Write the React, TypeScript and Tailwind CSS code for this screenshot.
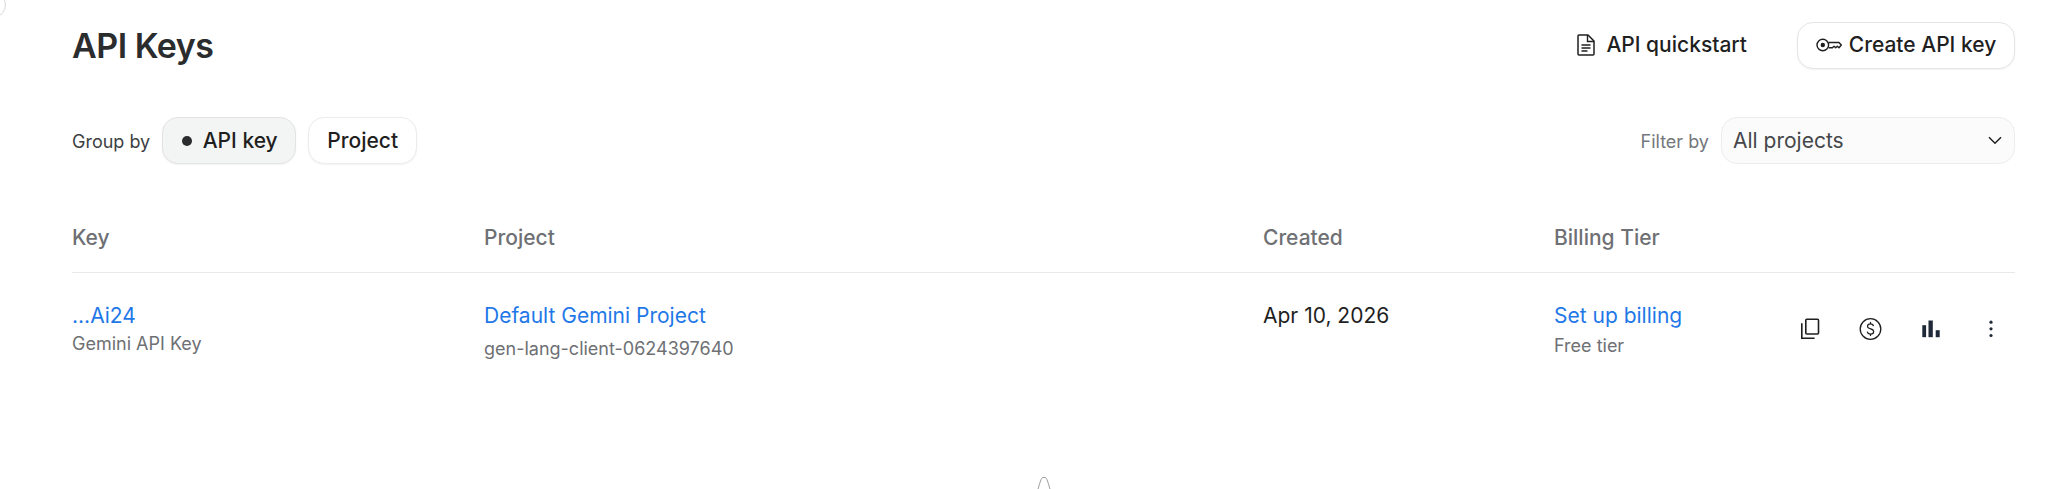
import React from "react";

const Copy = () => (
  <svg width="24" height="24" viewBox="0 0 24 24" fill="none" stroke="#1f1f1f" strokeWidth="1.6">
    <rect x="7.800" y="2.300" width="12.700" height="14.700" rx="1" />
    <path d="M3.800 6.200V21.200h12.800" />
  </svg>
);
const Dollar = () => (
  <svg width="24" height="24" viewBox="0 0 24 24" fill="none" stroke="#1f1f1f" strokeWidth="1.3" className="translate-x-[0.5px]">
    <circle cx="12" cy="12" r="10.300" />
    <path d="M15 9.200c-.3-1.500-1.500-2.400-3-2.400-1.700 0-3 1-3 2.500 0 3.400 6.200 1.900 6.200 5.200 0 1.600-1.400 2.600-3.200 2.600-1.600 0-2.900-.9-3.200-2.400M12 5v1.800M12 17.200V19" strokeWidth="1.200" />
  </svg>
);
const Bars = () => (
  <svg width="24" height="24" viewBox="0 0 24 24" fill="#1f2937">
    <rect x="3.300" y="8.200" width="3.800" height="12" />
    <rect x="9.500" y="3.500" width="4.300" height="16.700" />
    <rect x="16.700" y="13.200" width="4" height="7" />
  </svg>
);
const Dots = () => (
  <svg width="24" height="24" viewBox="0 0 24 24" fill="#1f2937">
    <circle cx="12" cy="5.200" r="1.600" />
    <circle cx="12" cy="11.800" r="1.600" />
    <circle cx="12" cy="18.500" r="1.600" />
  </svg>
);
const Doc = () => (
  <svg width="18" height="22" viewBox="0 0 18 22" fill="none" stroke="#1f1f1f" strokeWidth="1.500" className="shrink-0">
    <path d="M1 2a1 1 0 0 1 1-1h9l6 6v13a1 1 0 0 1-1 1H2a1 1 0 0 1-1-1z" strokeLinejoin="round" />
    <path d="M10.500 1v6.500H17M4.500 11h9M4.500 14h9M4.500 17h6" strokeWidth="1.400" />
  </svg>
);
const Key = () => (
  <svg width="26" height="14" viewBox="0 0 26 14" fill="none" stroke="#1f1f1f" strokeWidth="1.400" className="shrink-0">
    <circle cx="6.800" cy="7" r="5.800" />
    <circle cx="6.800" cy="7" r="1.500" fill="#1f1f1f" />
    <path d="M12.500 4.500h10.500l2.300 2.500-2.300 2.800-1.700-1.500-1.600 1.500-1.700-1.500-1.600 1.500H12.500" strokeLinejoin="round" />
  </svg>
);
const Chevron = () => (
  <svg width="14" height="9" viewBox="0 0 14 9" fill="none" stroke="#1f1f1f" strokeWidth="1.500" className="-mt-[2px] shrink-0">
    <path d="M1 1.200l6 6 6-6" />
  </svg>
);

export default function App() {
  return (
    <div className="relative h-[489px] w-[2060px] overflow-hidden bg-white pl-[72px] pr-[45px] text-[#1f1f1f] font-['Inter',sans-serif]">
      <div className="absolute -left-[20px] -top-[8px] h-[26px] w-[26px] rounded-full border border-[#dadada] bg-white" />
      <svg className="absolute left-[1037px] top-[476px]" width="14" height="13" viewBox="0 0 14 13" fill="none" stroke="#9a9a9a" strokeWidth="1">
        <path d="M1 13C3 7 4 1.500 6 1.500h2C10 1.500 11 7 13 13" />
      </svg>

      <div className="flex h-[89px] items-center justify-between">
        <h1 className="pt-[2px] text-[34px] font-semibold leading-10 tracking-[-0.5px] text-[#2b2c2e]">API Keys</h1>
        <div className="flex items-center gap-[50px] pt-[1px]">
          <div className="flex items-center gap-[11px] text-[21px] font-medium">
            <Doc />
            <span>API quickstart</span>
          </div>
          <div className="flex h-[47px] w-[218px] items-center justify-center gap-[7px] rounded-[16px] border border-[#e5e5e5] bg-white text-[21px] font-medium shadow-[0_1px_2px_rgba(0,0,0,0.05)]">
            <Key />
            <span>Create API key</span>
          </div>
        </div>
      </div>

      <div className="mt-[28px] flex h-[47px] items-center justify-between">
        <div className="flex items-center">
          <span className="mr-[12px] pt-[2px] text-[18px] text-[#3c3f43]">Group by</span>
          <div className="flex h-[47px] w-[134px] items-center justify-center gap-[11px] rounded-[16px] border border-[#e3e3e3] bg-[#f3f4f4] pl-[1px] pt-[1px] text-[21px] font-medium shadow-[0_1px_2px_rgba(0,0,0,0.05)]">
            <span className="h-[10px] w-[10px] rounded-full bg-[#2b2c2e]" />
            <span>API key</span>
          </div>
          <div className="ml-[12px] flex h-[47px] w-[109px] items-center justify-center rounded-[16px] border border-[#ececec] bg-white pt-[1px] text-[21px] font-medium shadow-[0_1px_2px_rgba(0,0,0,0.05)]">
            Project
          </div>
        </div>
        <div className="flex items-center">
          <span className="mr-[12px] pt-[2px] text-[18px] text-[#74777c]">Filter by</span>
          <div className="flex h-[47px] w-[294px] items-center justify-between rounded-[16px] border border-[#ececec] bg-[#fbfbfb] pl-[11px] pr-[12px] pt-[1px] text-[21px] text-[#45474a]">
            <span>All projects</span>
            <Chevron />
          </div>
        </div>
      </div>

      <div className="mt-[51px] grid h-[58px] grid-cols-[412px_779px_292px_1fr] items-center border-b border-[#e8e8e8] pb-[12px] text-[21px] font-medium text-[#6e7074]">
        <div>Key</div>
        <div>Project</div>
        <div>Created</div>
        <div className="-ml-[1px]">Billing Tier</div>
      </div>

      <div className="grid grid-cols-[412px_779px_292px_1fr] pt-[29px]">
        <div>
          <div className="text-[21px] leading-[28px] text-[#1f78e8]">...Ai24</div>
          <div className="mt-[3px] text-[18px] leading-[22px] text-[#6e7074]">Gemini API Key</div>
        </div>
        <div>
          <div className="text-[21px] leading-[28px] text-[#1f78e8]">Default Gemini Project</div>
          <div className="mt-[8px] text-[18px] leading-[22px] text-[#6e7074]">gen-lang-client-0624397640</div>
        </div>
        <div className="text-[21px] leading-[28px]">Apr 10, 2026</div>
        <div className="-ml-[1px] flex items-start justify-between">
          <div>
            <div className="text-[21px] leading-[28px] text-[#1f78e8]">Set up billing</div>
            <div className="mt-[5px] text-[18px] leading-[22px] text-[#6e7074]">Free tier</div>
          </div>
          <div className="mr-[12px] mt-[15px] flex items-center gap-[36.500px]">
            <Copy />
            <Dollar />
            <Bars />
            <Dots />
          </div>
        </div>
      </div>
    </div>
  );
}
